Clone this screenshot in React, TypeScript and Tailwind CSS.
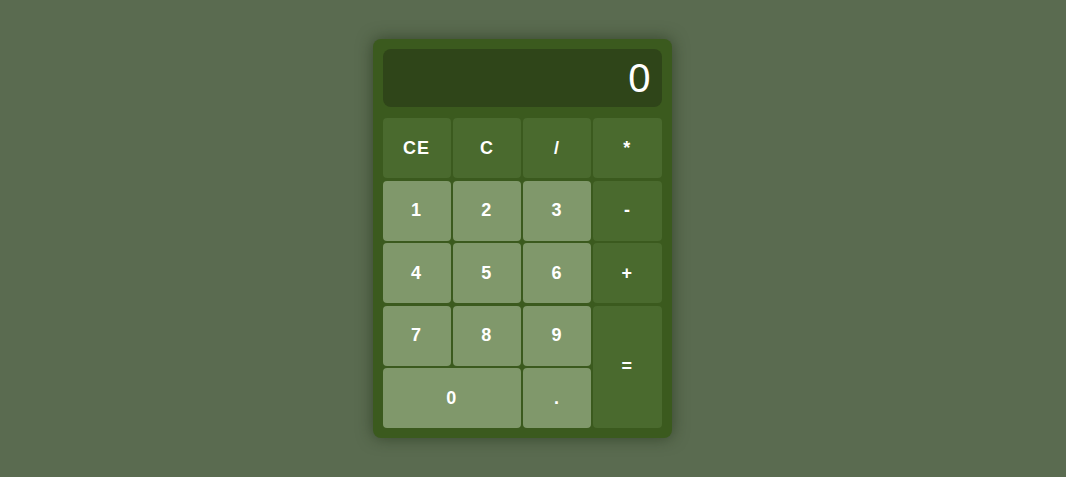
import React, { useState } from "react";

type Key = {
  label: string;
  kind: "op" | "num";
  span?: string;
};

const keys: Key[] = [
  { label: "CE", kind: "op" },
  { label: "C", kind: "op" },
  { label: "/", kind: "op" },
  { label: "*", kind: "op" },
  { label: "1", kind: "num" },
  { label: "2", kind: "num" },
  { label: "3", kind: "num" },
  { label: "-", kind: "op" },
  { label: "4", kind: "num" },
  { label: "5", kind: "num" },
  { label: "6", kind: "num" },
  { label: "+", kind: "op" },
  { label: "7", kind: "num" },
  { label: "8", kind: "num" },
  { label: "9", kind: "num" },
  { label: "=", kind: "op", span: "row-span-2" },
  { label: "0", kind: "num", span: "col-span-2" },
  { label: ".", kind: "num" },
];

function App() {
  const [display, setDisplay] = useState("0");

  function press(label: string) {
    if (label === "CE" || label === "C") {
      setDisplay("0");
      return;
    }
    if (label === "=") {
      try {
        // eslint-disable-next-line no-new-func
        setDisplay(String(Function(`return (${display})`)()));
      } catch {
        setDisplay("0");
      }
      return;
    }
    setDisplay((prev) => (prev === "0" && label !== "." ? label : prev + label));
  }

  return (
    <div className="flex h-[477px] w-full items-start justify-center bg-[#5a6b50] pt-[39px] font-['Liberation_Sans',Arial,sans-serif]">
      <div className="mr-[22px] w-[299px] rounded-lg bg-[#3b5a1e] p-[10px] shadow-[0_0_16px_rgba(30,45,20,0.6)]">
        <div className="mb-[11px] flex h-[58px] items-center justify-end rounded-lg bg-[#2f4519] px-[11px] text-[40px] leading-none text-white">
          {display}
        </div>
        <div className="grid grid-cols-4 auto-rows-[60px] gap-x-[2px] gap-y-[2.5px]">
          {keys.map((k) => (
            <button
              key={k.label}
              onClick={() => press(k.label)}
              className={`${k.span ?? ""} flex items-center justify-center rounded-[4px] text-[18px] font-bold tracking-[1px] text-white ${
                k.kind === "op" ? "bg-[#4a6a2e]" : "bg-[#80986b]"
              }`}
            >
              {k.label}
            </button>
          ))}
        </div>
      </div>
    </div>
  );
}

export default App;
